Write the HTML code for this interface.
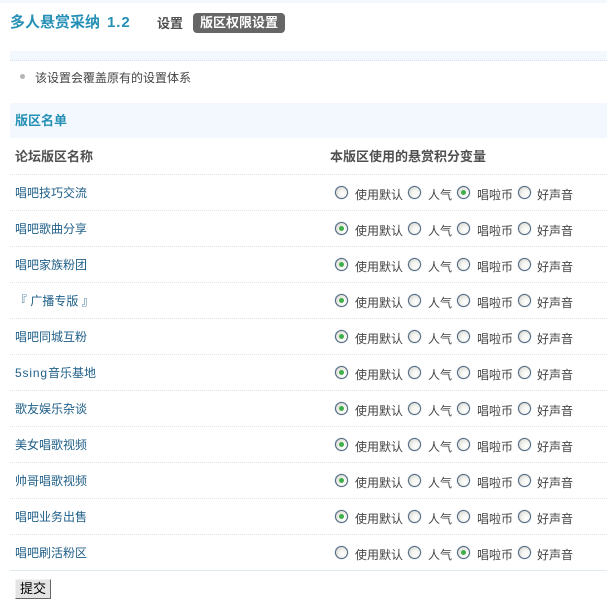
<!DOCTYPE html>
<html lang="zh"><head><meta charset="utf-8"><title>多人悬赏采纳</title>
<style>
html,body{margin:0;padding:0;background:#fff}
body{width:607px;height:605px;position:relative;overflow:hidden;font:12px/14px "Liberation Sans","WenQuanYi Zen Hei","Noto Sans CJK SC",sans-serif;color:#444}
.a{position:absolute;white-space:nowrap}
.b{font-size:13px;font-weight:bold;color:#505050}
.row{position:absolute;left:10px;width:597px;height:36px;border-bottom:1px dotted #dde3e8;box-sizing:border-box}
.name{position:absolute;left:5px;top:11px;color:#1f5f88;line-height:14px}
.r{position:absolute;top:11px;width:13px;height:13px;box-sizing:border-box;border:1px solid #4d6680;border-radius:50%;background:radial-gradient(circle at 65% 65%,#fff 0,#f3f3ef 40%,#cfcfc8 100%);box-shadow:0 0 1px #7f93a8}
.r.on::after{content:"";position:absolute;left:3px;top:3px;width:5px;height:5px;border-radius:50%;background:#3fae4a}
.l{position:absolute;top:13px;line-height:14px;color:#444}
.r1{left:325px}.r2{left:398px}.r3{left:447px}.r4{left:508px}
.l1{left:345px}.l2{left:418px}.l3{left:467px}.l4{left:527px}
</style></head><body>
<div class="a" style="left:0;top:0;width:607px;height:3px;background:#f2f8fd"></div>
<div class="a" style="left:10px;top:14px;font-size:15px;line-height:18px;font-weight:bold;color:#2590b5">多人悬赏采纳<span style="margin-left:7px;letter-spacing:.9px;font-size:15px">1.2</span></div>
<div class="a b" style="left:157px;top:17px">设置</div>
<div class="a b" style="left:193px;top:13px;width:92px;height:20px;background:#666;border-radius:4px;color:#fff;text-align:center;line-height:20px">版区权限设置</div>
<div class="a" style="left:10px;top:51px;width:597px;height:9px;background:#f2f8fd;border-bottom:1px dotted #d5e0ea"></div>
<div class="a" style="left:20px;top:74px;width:5px;height:5px;border-radius:50%;background:#b5b5b5"></div>
<div class="a" style="left:35px;top:71px">该设置会覆盖原有的设置体系</div>
<div class="a" style="left:10px;top:103px;width:597px;height:35px;background:#f2f8fd"></div>
<div class="a b" style="left:15px;top:114px;color:#2590b5">版区名单</div>
<div class="row" style="top:139px"><div class="a b" style="left:5px;top:11px">论坛版区名称</div><div class="a b" style="left:320px;top:11px">本版区使用的悬赏积分变量</div></div>
<div class="row" style="top:175px"><span class="name">唱吧技巧交流</span><i class="r r1"></i><span class="l l1">使用默认</span><i class="r r2"></i><span class="l l2">人气</span><i class="r r3 on"></i><span class="l l3">唱啦币</span><i class="r r4"></i><span class="l l4">好声音</span></div>
<div class="row" style="top:211px"><span class="name">唱吧歌曲分享</span><i class="r r1 on"></i><span class="l l1">使用默认</span><i class="r r2"></i><span class="l l2">人气</span><i class="r r3"></i><span class="l l3">唱啦币</span><i class="r r4"></i><span class="l l4">好声音</span></div>
<div class="row" style="top:247px"><span class="name">唱吧家族粉团</span><i class="r r1 on"></i><span class="l l1">使用默认</span><i class="r r2"></i><span class="l l2">人气</span><i class="r r3"></i><span class="l l3">唱啦币</span><i class="r r4"></i><span class="l l4">好声音</span></div>
<div class="row" style="top:283px"><span class="name">『 广播专版 』</span><i class="r r1 on"></i><span class="l l1">使用默认</span><i class="r r2"></i><span class="l l2">人气</span><i class="r r3"></i><span class="l l3">唱啦币</span><i class="r r4"></i><span class="l l4">好声音</span></div>
<div class="row" style="top:319px"><span class="name">唱吧同城互粉</span><i class="r r1 on"></i><span class="l l1">使用默认</span><i class="r r2"></i><span class="l l2">人气</span><i class="r r3"></i><span class="l l3">唱啦币</span><i class="r r4"></i><span class="l l4">好声音</span></div>
<div class="row" style="top:355px"><span class="name"><span style="letter-spacing:.85px">5sing</span>音乐基地</span><i class="r r1 on"></i><span class="l l1">使用默认</span><i class="r r2"></i><span class="l l2">人气</span><i class="r r3"></i><span class="l l3">唱啦币</span><i class="r r4"></i><span class="l l4">好声音</span></div>
<div class="row" style="top:391px"><span class="name">歌友娱乐杂谈</span><i class="r r1 on"></i><span class="l l1">使用默认</span><i class="r r2"></i><span class="l l2">人气</span><i class="r r3"></i><span class="l l3">唱啦币</span><i class="r r4"></i><span class="l l4">好声音</span></div>
<div class="row" style="top:427px"><span class="name">美女唱歌视频</span><i class="r r1 on"></i><span class="l l1">使用默认</span><i class="r r2"></i><span class="l l2">人气</span><i class="r r3"></i><span class="l l3">唱啦币</span><i class="r r4"></i><span class="l l4">好声音</span></div>
<div class="row" style="top:463px"><span class="name">帅哥唱歌视频</span><i class="r r1 on"></i><span class="l l1">使用默认</span><i class="r r2"></i><span class="l l2">人气</span><i class="r r3"></i><span class="l l3">唱啦币</span><i class="r r4"></i><span class="l l4">好声音</span></div>
<div class="row" style="top:499px"><span class="name">唱吧业务出售</span><i class="r r1 on"></i><span class="l l1">使用默认</span><i class="r r2"></i><span class="l l2">人气</span><i class="r r3"></i><span class="l l3">唱啦币</span><i class="r r4"></i><span class="l l4">好声音</span></div>
<div class="row" style="top:535px;border-bottom:1px solid #dfe9f0"><span class="name">唱吧刷活粉区</span><i class="r r1"></i><span class="l l1">使用默认</span><i class="r r2"></i><span class="l l2">人气</span><i class="r r3 on"></i><span class="l l3">唱啦币</span><i class="r r4"></i><span class="l l4">好声音</span></div>
<div class="a" style="left:15px;top:579px;width:36px;height:20px;box-sizing:border-box;background:#e4e4e4;border:1px solid;border-color:#f2f2f2 #666 #666 #f2f2f2;color:#000;font-size:13px;line-height:18px;text-align:center">提交</div>
</body></html>
